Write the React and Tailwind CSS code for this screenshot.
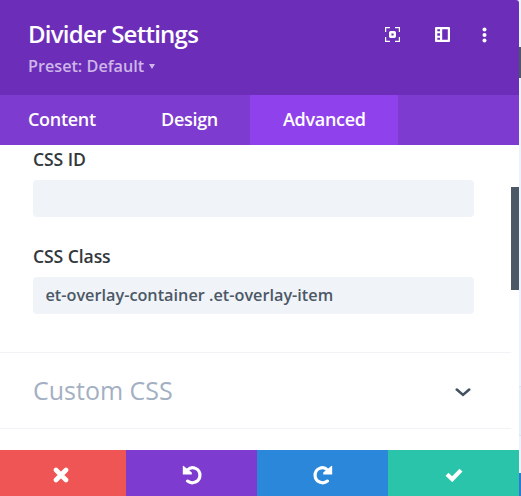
import React, { useState } from 'react';

const tabs = [
  { name: 'Content', className: 'w-[124px] pl-7' },
  { name: 'Design', className: 'w-[126px] pl-[37px]' },
  { name: 'Advanced', className: 'w-[148px] pl-[33px]' },
];

const ExpandIcon = () => (
  <svg width="15" height="15" viewBox="0 0 15 15" fill="none" stroke="#fff">
    <path d="M.6 5V.6H5M10 .6h4.4V5M14.4 10v4.4H10M5 14.4H.6V10" strokeWidth="1.2" />
    <rect x="5.2" y="5.2" width="4.6" height="4.6" rx=".5" strokeWidth="2.4" />
  </svg>
);

const SidebarIcon = () => (
  <svg width="15" height="15" viewBox="0 0 15 15">
    <path
      fill="#fff"
      fillRule="evenodd"
      d="M1 0h13a1 1 0 0 1 1 1v13a1 1 0 0 1-1 1H1a1 1 0 0 1-1-1V1a1 1 0 0 1 1-1zM7.2 2.2v10.6h5.6V2.2zM2.3 2.3v2H5v-2zM2.3 6.3v2.4H5V6.3zM2.3 10.7v2H5v-2z"
    />
  </svg>
);

const DotsIcon = () => (
  <svg width="5" height="16" viewBox="0 0 5 16" fill="#fff">
    <circle cx="2.5" cy="2.4" r="2" />
    <circle cx="2.5" cy="8" r="2" />
    <circle cx="2.5" cy="13.6" r="2" />
  </svg>
);

const CloseIcon = () => (
  <svg width="16" height="16" viewBox="0 0 16 16" fill="none" stroke="#fff" strokeWidth="4.6" strokeLinecap="round">
    <path d="M3 3l10 10M13 3L3 13" />
  </svg>
);

const UndoIcon = ({ flip }) => (
  <svg width="20" height="20" viewBox="0 0 20 20" className={flip ? '-scale-x-100' : ''}>
    <path d="M5.6 4.8C10 .6 17.9 3.4 17.9 10.2C17.9 17.2 10 19.6 5.6 16.1" fill="none" stroke="#fff" strokeWidth="3.2" strokeLinecap="round" />
    <path d="M1.3 .7L9.8 7.4V9.6H.8V1z" fill="#fff" />
  </svg>
);

const CheckIcon = () => (
  <svg width="18" height="14" viewBox="0 0 18 14" fill="none" stroke="#fff" strokeWidth="4.2">
    <path d="M2 6.2l5.2 5L16 2.1" />
  </svg>
);

const Field = ({ label, value, onChange }) => (
  <label className="block h-[97px]">
    <span className="block h-[35px] text-[17.6px] leading-[28px] tracking-[-0.1px] font-semibold text-[#32373c]">{label}</span>
    <input
      type="text"
      value={value}
      onChange={(e) => onChange(e.target.value)}
      className="block w-[441px] h-[37px] rounded-[4px] bg-[#f0f3f8] pl-[12.5px] pb-px text-[16.25px] font-semibold text-[#4c5866] outline-none"
    />
  </label>
);

const App = () => {
  const [activeTab, setActiveTab] = useState('Advanced');
  const [cssId, setCssId] = useState('');
  const [cssClass, setCssClass] = useState('et-overlay-container .et-overlay-item');

  return (
    <div className="flex w-[521px] h-[496px] overflow-hidden bg-[#eaf3fe] font-['Open_Sans',sans-serif]">
      <div className="flex flex-col w-[519px] rounded-tr-[3px] overflow-hidden bg-white">
        <header className="flex justify-between h-[95px] bg-[#6c2eb9]">
          <div className="pl-7 pt-[18px]">
            <h1 className="text-[24px] leading-8 tracking-[-0.75px] font-semibold whitespace-nowrap text-white">Divider Settings</h1>
            <button className="flex items-center h-8 text-[16.2px] font-semibold text-[#ceb6e8]">
              Preset: Default
              <svg width="6" height="5" viewBox="0 0 6 5" fill="currentColor" className="ml-[5px]">
                <path d="M0 0h6L3 5z" />
              </svg>
            </button>
          </div>
          <div className="flex items-start pt-[27px] pr-8">
            <ExpandIcon />
            <span className="ml-[35px]"><SidebarIcon /></span>
            <span className="ml-[32px]"><DotsIcon /></span>
          </div>
        </header>

        <nav className="flex h-[50px] bg-[#7e3bd0]">
          {tabs.map((tab) => (
            <button
              key={tab.name}
              onClick={() => setActiveTab(tab.name)}
              className={`${tab.className} pb-0.5 text-left text-[18px] tracking-[-0.3px] font-semibold text-white ${activeTab === tab.name ? 'bg-[#8f42ec]' : ''}`}
            >
              {tab.name}
            </button>
          ))}
        </nav>

        <main className="flex h-[305px]">
          <div className="w-[511px]">
            <div className="h-[207px] pl-[33px]">
              <Field label="CSS ID" value={cssId} onChange={setCssId} />
              <Field label="CSS Class" value={cssClass} onChange={setCssClass} />
            </div>
            <button className="flex items-center justify-between w-full h-[77px] pl-[33px] pr-10 border-y border-[#f1f3f7]">
              <span className="text-[25px] text-[#a3b0c2]">Custom CSS</span>
              <svg width="16" height="9" viewBox="0 0 16 9" fill="none" stroke="#42505f" strokeWidth="2.6" strokeLinecap="round" className="mt-[3px]">
                <path d="M1.8 1.6L8 6.9l6.2-5.3" />
              </svg>
            </button>
          </div>
          {/* scrollbar */}
          <div className="w-2 pt-[42px]">
            <div className="h-[103px] bg-[#4c5866]" />
          </div>
        </main>

        <footer className="flex h-[46px]">
          <button className="flex items-center justify-center w-[126px] pr-[5px] pt-[3px] bg-[#ef5555]"><CloseIcon /></button>
          <button className="flex items-center justify-center w-[131px] pt-[3px] bg-[#7e3bd0]"><UndoIcon /></button>
          <button className="flex items-center justify-center w-[131px] pt-[3px] bg-[#2b87da]"><UndoIcon flip /></button>
          <button className="flex items-center justify-center w-[131px] pt-[3px] bg-[#29c4a9]"><CheckIcon /></button>
        </footer>
      </div>

      {/* page behind the panel */}
      <div className="flex flex-col w-0.5">
        <div className="h-[47px]" />
        <div className="h-[31px] bg-[#4c5866]" />
        <div className="h-[308px]" />
        <div className="h-[50px] border-y border-[#d9e3f0] bg-[#e6f0fc]" />
        <div className="h-[37px]" />
        <div className="h-[23px] bg-[#2b7bd6]" />
      </div>
    </div>
  );
};

export default App;
